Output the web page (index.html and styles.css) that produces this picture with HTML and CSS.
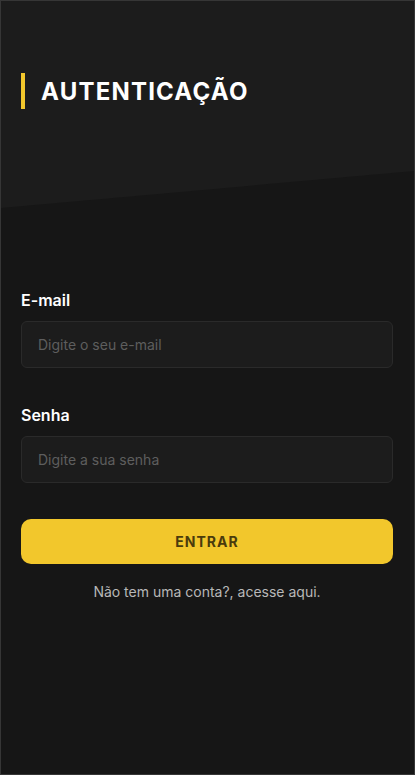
FILE: index.html
```html
<!DOCTYPE html>
<html lang="pt-BR">
<head>
<meta charset="utf-8">
<title>Autenticação</title>
<link rel="stylesheet" href="styles.css">
</head>
<body>
<div class="screen">
  <header class="hero">
    <h1 class="title">AUTENTICAÇÃO</h1>
  </header>
  <form class="form">
    <div class="field">
      <label class="label" for="email">E-mail</label>
      <input class="input" id="email" type="text" placeholder="Digite o seu e-mail">
    </div>
    <div class="field field-last">
      <label class="label" for="senha">Senha</label>
      <input class="input" id="senha" type="password" placeholder="Digite a sua senha">
    </div>
    <button class="btn" type="button">ENTRAR</button>
    <p class="hint">Não tem uma conta?, acesse aqui.</p>
  </form>
</div>
</body>
</html>
```
FILE: styles.css
```css
* { box-sizing: border-box; }
html, body { margin: 0; padding: 0; }
body {
  background: #161616;
  font-family: Inter, "Noto Sans", sans-serif;
}
.screen {
  width: 415px;
  height: 775px;
  border: 1px solid #363636;
  background: #161616;
}
.hero {
  height: 207px;
  background: #1c1c1c;
  clip-path: polygon(0 0, 100% 0, 100% 170px, 0 207px);
  padding: 72px 20px 0;
}
.title {
  margin: 0;
  border-left: 4px solid #f2c72c;
  padding-left: 16px;
  height: 36px;
  display: flex;
  align-items: center;
  color: #ffffff;
  font-size: 24px;
  font-weight: 700;
  letter-spacing: 1.2px;
}
.form {
  padding: 82px 21px 0 20px;
  display: flex;
  flex-direction: column;
}
.field {
  display: flex;
  flex-direction: column;
  margin-bottom: 37px;
}
.field-last { margin-bottom: 36px; }
.label {
  color: #ffffff;
  font-size: 16px;
  font-weight: 600;
  line-height: 20px;
  margin-bottom: 11px;
}
.input {
  height: 47px;
  background: #1c1c1c;
  border: 1px solid #2a2a2a;
  border-radius: 6px;
  padding: 0 16px;
  color: #fff;
  font-family: inherit;
  font-size: 14px;
  outline: none;
}
.input::placeholder { color: #5e5e5e; }
.btn {
  height: 45px;
  background: #f2c72c;
  border: none;
  border-radius: 10px;
  color: #4a3b0c;
  font-family: inherit;
  font-size: 14px;
  font-weight: 700;
  letter-spacing: 1px;
}
.hint {
  margin: 19px 0 0;
  text-align: center;
  color: #b8b8b8;
  font-size: 14px;
  line-height: 18px;
}
```
